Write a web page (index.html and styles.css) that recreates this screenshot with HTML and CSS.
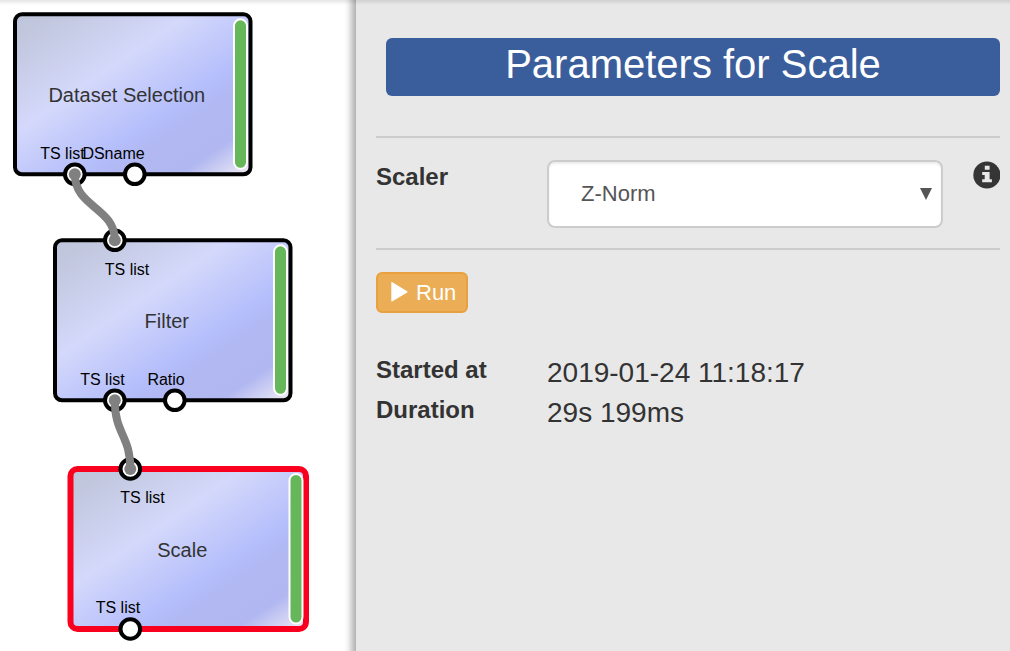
FILE: index.html
```html
<!DOCTYPE html>
<html lang="en">
<head>
<meta charset="utf-8">
<title>Workflow</title>
<link rel="stylesheet" href="styles.css">
</head>
<body>
<div class="app">
  <main class="canvas">
    <svg class="graph" width="356" height="651" viewBox="0 0 356 651">
      <defs>
        <linearGradient id="fill" x1="0" y1="0" x2="1" y2="1">
          <stop offset="0" stop-color="#bfc5d9"/>
          <stop offset="0.08" stop-color="#c1c7dd"/>
          <stop offset="0.37" stop-color="#d4d8fb"/>
          <stop offset="0.63" stop-color="#b4befb"/>
          <stop offset="0.71" stop-color="#b1b8f2"/>
          <stop offset="0.85" stop-color="#b1b7f1"/>
          <stop offset="1" stop-color="#f1eef5"/>
        </linearGradient>
      </defs>
      <g transform="translate(15 14.3)">
        <rect class="node" width="235.5" height="160" rx="7"/>
        <rect class="status" x="219" y="5" width="13" height="149.5" rx="6.5"/>
        <text class="name" x="111.8" y="87.7">Dataset Selection</text>
        <text class="port-label" x="25.2" y="144.7">TS list</text>
        <text class="port-label" x="67.4" y="144.7">DSname</text>
        <circle class="port" cx="59.8" cy="160" r="9.8"/>
        <circle class="port" cx="119.8" cy="160" r="9.8"/>
      </g>
      <g transform="translate(55 240.3)">
        <rect class="node" width="235.5" height="160" rx="7"/>
        <rect class="status" x="219" y="5" width="13" height="149.5" rx="6.5"/>
        <text class="name" x="111.8" y="87.7">Filter</text>
        <text class="port-label" x="49.8" y="34.7">TS list</text>
        <text class="port-label" x="25.2" y="144.7">TS list</text>
        <text class="port-label" x="92.4" y="144.7">Ratio</text>
        <circle class="port" cx="59.8" cy="0" r="9.8"/>
        <circle class="port" cx="59.8" cy="160" r="9.8"/>
        <circle class="port" cx="119.8" cy="160" r="9.8"/>
      </g>
      <g transform="translate(70.5 469)">
        <rect class="node selected" width="235.5" height="160" rx="7"/>
        <rect class="status" x="219" y="5" width="13" height="149.5" rx="6.5"/>
        <text class="name" x="111.8" y="88">Scale</text>
        <text class="port-label" x="49.8" y="34">TS list</text>
        <text class="port-label" x="25.2" y="144">TS list</text>
        <circle class="port" cx="59.8" cy="0" r="9.8"/>
        <circle class="port" cx="59.8" cy="160" r="9.8"/>
      </g>
      <path class="link" d="M74.8 174.3C74.8 207.3 114.8 207.3 114.8 240.3"/>
      <path class="link" d="M114.8 400.3C114.8 434.6 130.3 434.6 130.3 469"/>
      <circle class="plug" cx="74.8" cy="174.3" r="6"/>
      <circle class="plug" cx="114.8" cy="240.3" r="6"/>
      <circle class="plug" cx="114.8" cy="400.3" r="6"/>
      <circle class="plug" cx="130.3" cy="469" r="6"/>
    </svg>
  </main>
  <aside class="panel">
    <h1 class="title">Parameters for Scale</h1>
    <section class="parameter">
      <label class="label">Scaler</label>
      <div class="select">
        <span>Z-Norm</span>
        <svg width="12" height="12" viewBox="0 0 12 12"><path d="M0 0H12L6 12Z" fill="#555"/></svg>
      </div>
      <svg class="info" width="27" height="28" viewBox="0 0 27 28">
        <circle cx="13.9" cy="14" r="13.6" fill="#353535"/>
        <path d="M11.8 4.7H16.6V8.8H11.8ZM9.2 11H16.6V18.3H18.9V21.3H9.2V18.3H11.7V14H9.2Z" fill="#e8e8e8"/>
      </svg>
    </section>
    <button class="run" type="button">
      <svg width="17" height="20" viewBox="0 0 17 20"><path d="M0.3 0.4Q0.3-0.2 1 0.1L16.2 9.2Q17 9.8 16.2 10.4L1 19.5Q0.3 19.8 0.3 19.2Z" fill="#fff"/></svg>
      <span>Run</span>
    </button>
    <dl class="facts">
      <dt>Started at</dt><dd>2019-01-24 11:18:17</dd>
      <dt>Duration</dt><dd>29s 199ms</dd>
    </dl>
  </aside>
  <div class="top-shadow"></div>
</div>
</body>
</html>
```

FILE: styles.css
```css
* { box-sizing: border-box; }
body {
  margin: 0;
  font-family: "Liberation Sans", Arial, sans-serif;
  color: #333;
}
.app {
  position: relative;
  display: flex;
  width: 1010px;
  height: 651px;
  overflow: hidden;
  background: #fff;
}
.canvas {
  width: 356px;
  flex: none;
  background: linear-gradient(to left, #b2b2b2, #c8c8c8 3px, #e2e2e2 6px, #f7f7f7 9px, #fff 12px);
}
.graph { display: block; }
.node { fill: url(#fill); stroke: #000; stroke-width: 4; }
.node.selected { stroke: #f9001f; stroke-width: 6; }
.status { fill: #66b65a; stroke: #fff; stroke-width: 2; }
.name { font-size: 20px; fill: #333; text-anchor: middle; }
.port-label { font-size: 16px; fill: #000; }
.port { fill: #fff; stroke: #000; stroke-width: 4; }
.link { fill: none; stroke: #808080; stroke-width: 8; }
.plug { fill: #808080; }
.panel {
  flex: 1;
  padding: 38px 10px 0 20px;
  background: #e8e8e8;
}
.title {
  height: 58px;
  margin: 0 0 40px 10px;
  border-radius: 6px;
  background: #3a5e9c;
  color: #fff;
  font-size: 40px;
  font-weight: 400;
  line-height: 52px;
  text-align: center;
}
.parameter {
  display: grid;
  grid-template-columns: 171px 396px 1fr;
  align-items: start;
  height: 114px;
  padding-top: 22px;
  border-top: 2px solid #ccc;
  border-bottom: 2px solid #ccc;
}
.label { padding-top: 3px; font-size: 24px; font-weight: 700; line-height: 28px; }
.select {
  display: flex;
  align-items: center;
  justify-content: space-between;
  height: 68px;
  padding: 0 9px 1px 32px;
  border: 2px solid #ccc;
  border-radius: 8px;
  background: #fff;
  box-shadow: inset 0 2px 2px rgba(0, 0, 0, 0.075);
  color: #555;
  font-size: 22px;
}
.info { justify-self: end; margin-top: 1px; }
.run {
  display: flex;
  align-items: center;
  gap: 8px;
  width: 92px;
  height: 41px;
  margin-top: 22px;
  padding: 0 0 0 13px;
  border: 2px solid #e9a040;
  border-radius: 6px;
  background: #ebad55;
  color: #fff;
  font: 22px "Liberation Sans", Arial, sans-serif;
}
.run svg { margin-bottom: 1px; }
.facts {
  display: grid;
  grid-template-columns: 171px 1fr;
  grid-auto-rows: 40px;
  margin: 37px 0 0;
}
.facts dt { font-size: 24px; font-weight: 700; line-height: 40px; }
.facts dd { margin: 0; font-size: 28px; line-height: 45px; }
.top-shadow {
  position: absolute;
  inset: 0 0 auto;
  height: 5px;
  background: linear-gradient(rgba(0, 0, 0, 0.1), rgba(0, 0, 0, 0));
}
```
